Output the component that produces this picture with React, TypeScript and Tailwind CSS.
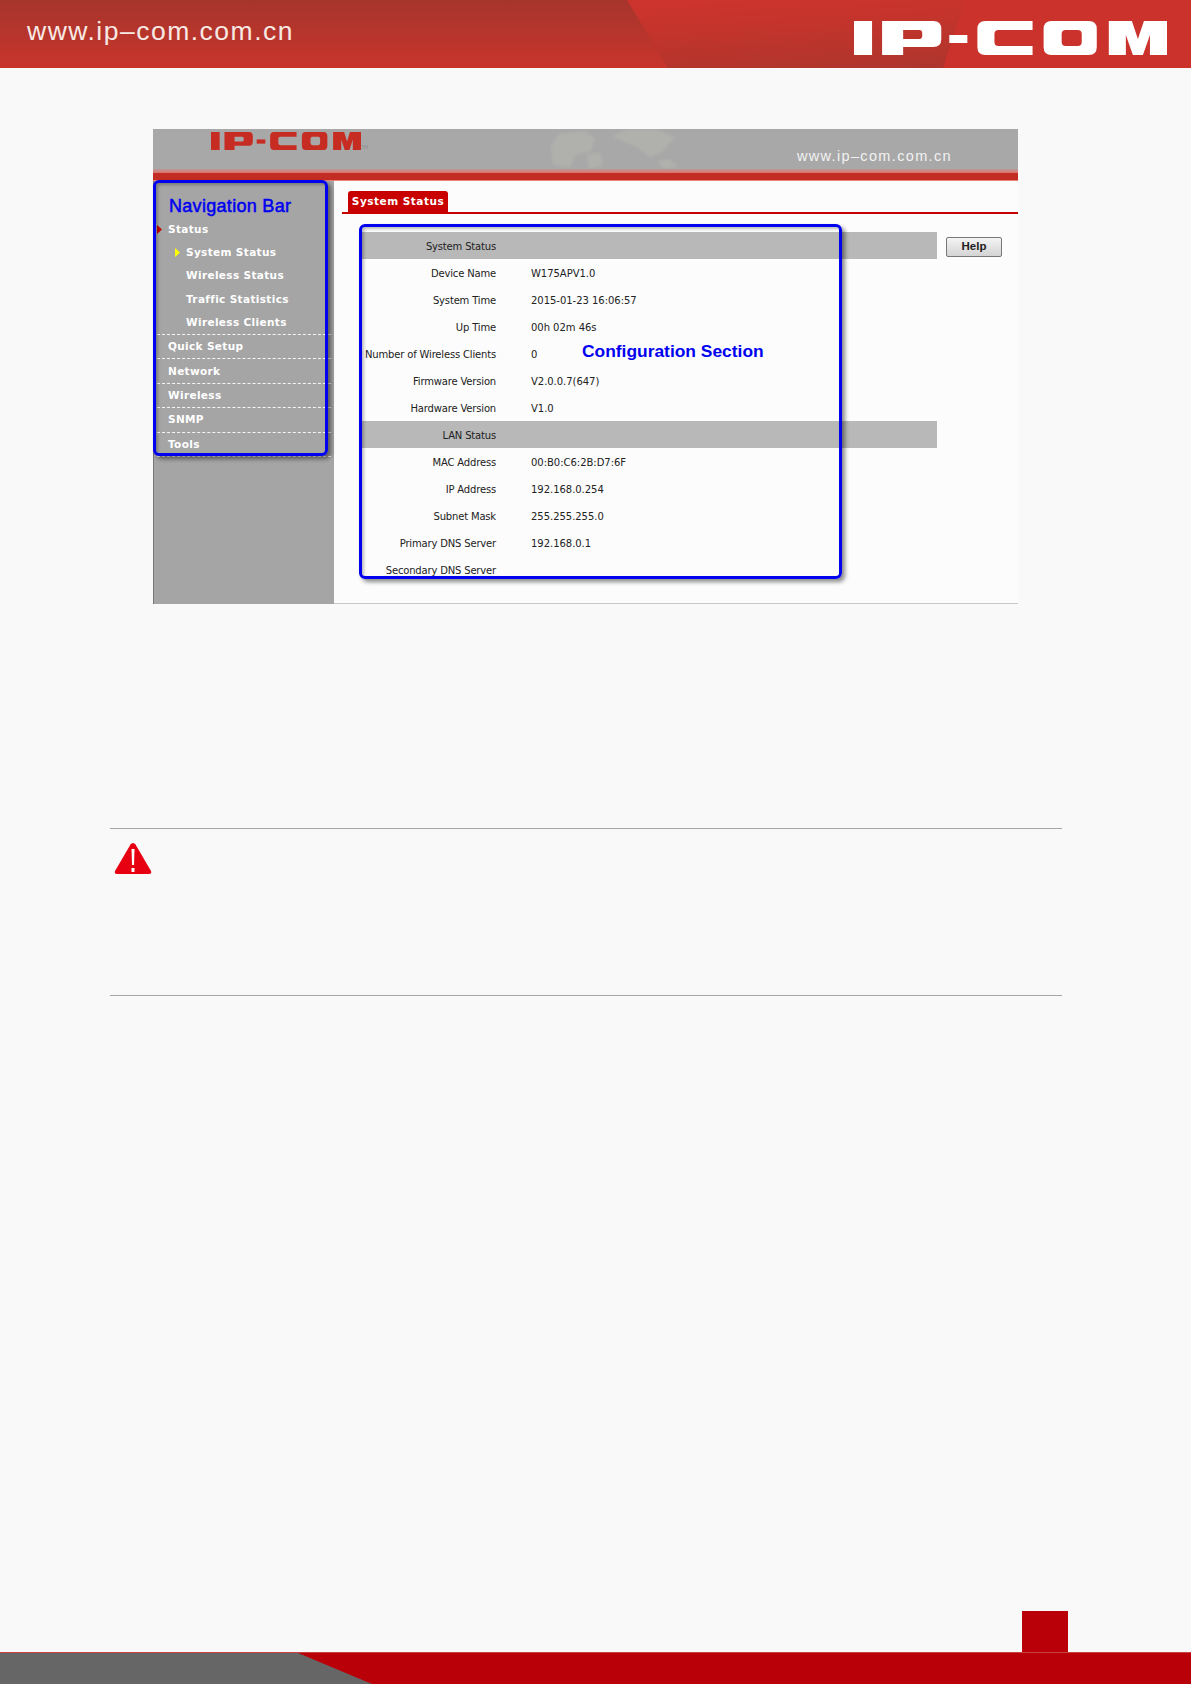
import React from "react";

function Logo({ className, fill }: { className: string; fill: string }) {
  return (
    <svg className={className} viewBox="0 0 312 34" preserveAspectRatio="none" fill={fill}>
      <rect x="0" y="0" width="18" height="34" />
      <path fillRule="evenodd" d="M28 0H79Q87 0 87 8V18Q87 26 79 26H49V34H28ZM49 9V18H65Q68 18 68 15V12Q68 9 65 9Z" />
      <rect x="95" y="14" width="18" height="8" />
      <path d="M131 0H178V9H144Q140 9 140 13V21Q140 25 144 25H178V34H131Q123 34 123 26V8Q123 0 131 0Z" />
      <path fillRule="evenodd" d="M197 0H234Q242 0 242 8V26Q242 34 234 34H197Q189 34 189 26V8Q189 0 197 0ZM211 9Q207 9 207 13V21Q207 25 211 25H223Q227 25 227 21V13Q227 9 223 9Z" />
      <path d="M254 34V0H277L283 18L289 0H312V34H295V14L288 34H278L271 14V34Z" />
    </svg>
  );
}

const SideRow = ({ label, arrow, sub }: { label: string; arrow?: string; sub?: boolean }) => (
  <div className={`flex items-center h-[23.3px] pt-[1px] ${sub ? "pl-[18px]" : ""}`}>
    <svg className="w-[5px] h-[9px] shrink-0" viewBox="0 0 5 9">
      {arrow ? <path d="M0 0L5 4.5L0 9Z" fill={arrow} /> : null}
    </svg>
    <span className="ml-[6px] text-white font-bold">{label}</span>
  </div>
);

const TopRow = ({ label }: { label: string }) => (
  <div className="flex items-center h-[24.4px] pl-[11px] pt-[1px] border-b border-dashed border-white/90 text-white font-bold">
    {label}
  </div>
);

const rows: [string, string, boolean?][] = [
  ["System Status", "", true],
  ["Device Name", "W175APV1.0"],
  ["System Time", "2015-01-23 16:06:57"],
  ["Up Time", "00h 02m 46s"],
  ["Number of Wireless Clients", "0"],
  ["Firmware Version", "V2.0.0.7(647)"],
  ["Hardware Version", "V1.0"],
  ["LAN Status", "", true],
  ["MAC Address", "00:B0:C6:2B:D7:6F"],
  ["IP Address", "192.168.0.254"],
  ["Subnet Mask", "255.255.255.0"],
  ["Primary DNS Server", "192.168.0.1"],
  ["Secondary DNS Server", ""],
];

export default function App() {
  return (
    <div className="relative w-[1191px] h-[1684px] bg-[#f9f9f9] flex flex-col overflow-hidden font-['Liberation_Sans',sans-serif]">
      {/* Top banner */}
      <header className="relative h-[68px] shrink-0 bg-gradient-to-b from-[#a6352c] to-[#c8342c] flex items-center justify-between pl-[27px] pr-[24px]">
        <div className="absolute inset-0 [clip-path:polygon(627px_0,100%_0,100%_100%,668px_100%)] bg-gradient-to-br from-[#d9322e] via-[#c4342c] to-[#a8352c]" />
        <div className="absolute inset-0 [clip-path:polygon(965px_0,100%_0,100%_100%,943px_100%)] bg-[#cb322c]" />
        <span className="relative text-[#f7e9e4] text-[26.5px] leading-none tracking-[1.5px] -mt-[6px]">
          www.ip–com.com.cn
        </span>
        <Logo className="relative w-[313px] h-[34px] mt-[7px]" fill="#ffffff" />
      </header>

      <main className="flex-1 flex flex-col">
        {/* Screenshot of the web UI */}
        <div className="relative mt-[61px] ml-[153px] w-[865px] h-[475px] bg-[#fcfcfc] flex flex-col text-[11px] font-['DejaVu_Sans',sans-serif]">
          <div className="relative h-[40px] shrink-0 bg-[#a8a8a8] flex items-center justify-between pl-[58px] pr-[66px] overflow-hidden">
            <div className="flex items-start -mt-[16px]">
              <Logo className="w-[150px] h-[18px]" fill="#c62c22" />
              <span className="text-[5px] leading-none mt-[13px] text-[#8f8f8f] font-['Liberation_Sans',sans-serif]">TM</span>
            </div>
            <svg className="absolute left-[392px] top-0 w-[140px] h-[40px] blur-[1.5px]" viewBox="0 0 140 40" fill="#b0b0ad">
              <path d="M8 36L6 16L14 5L40 2L50 10L46 22L30 26L26 38Z" />
              <path d="M42 26L56 24L58 36L44 40Z" />
              <path d="M66 8L82 0H112L130 8L116 24L104 28L92 18L82 14Z" />
              <path d="M112 32L124 30L134 38L118 40Z" />
            </svg>
            <span className="relative text-[#f2f2f2] text-[14.5px] tracking-[1.35px] mt-[15px] font-['Liberation_Sans',sans-serif]">www.ip–com.com.cn</span>
          </div>
          <div className="h-[12px] shrink-0 flex flex-col">
            <div className="h-[4px] bg-gradient-to-b from-[#b49a98] to-[#e0706a]" />
            <div className="h-[7px] bg-[#c22c22]" />
            <div className="h-[1px] bg-[#ec8078]" />
          </div>

          <div className="flex-1 flex min-h-0">
            {/* Sidebar */}
            <aside className="w-[181px] shrink-0 bg-[#a5a5a5] border-l border-[#777777] pt-[36.5px] px-[3px] text-[10.5px] tracking-[0.35px] font-['DejaVu_Sans',sans-serif]">
              <SideRow label="Status" arrow="#c80000" />
              <SideRow label="System Status" arrow="#ffff00" sub />
              <SideRow label="Wireless Status" sub />
              <SideRow label="Traffic Statistics" sub />
              <div className="border-b border-dashed border-white/90">
                <SideRow label="Wireless Clients" sub />
              </div>
              <TopRow label="Quick Setup" />
              <TopRow label="Network" />
              <TopRow label="Wireless" />
              <TopRow label="SNMP" />
              <TopRow label="Tools" />
            </aside>

            {/* Content */}
            <section className="flex-1 flex flex-col border-b border-[#c8c8c8]">
              <div className="mt-[10px] ml-[8px] h-[23px] shrink-0 border-b-2 border-[#c80000] pl-[6px]">
                <div className="w-[100px] h-[21px] bg-[#c80000] rounded-t-[3px] flex items-center justify-center text-white font-bold text-[10.5px] tracking-[0.5px]">
                  System Status
                </div>
              </div>
              <div className="flex mt-[18px] ml-[27px]">
                <div className="w-[576px] flex flex-col text-[10px] text-[#222222]">
                  {rows.map(([k, v, head]) => (
                    <div key={k} className={`flex items-center h-[27px] pt-[2px] ${head ? "bg-[#b8b8b8]" : ""}`}>
                      <span className="w-[135px] text-right tracking-[-0.17px]">{k}</span>
                      <span className="ml-[35px] tracking-[-0.03px]">{v}</span>
                    </div>
                  ))}
                </div>
                <button className="ml-[9px] mt-[5px] w-[56px] h-[20px] rounded-[2px] border border-[#777777] bg-gradient-to-b from-[#f4f4f4] to-[#d4d4d4] text-[11.5px] font-bold text-[#222222] font-['Liberation_Sans',sans-serif]">
                  Help
                </button>
              </div>
            </section>
          </div>

          {/* Annotations laid over the screenshot */}
          <div className="absolute left-0 top-[51px] w-[175px] h-[276px] rounded-[6px] border-[3px] border-[#0000f0] shadow-[3px_3px_4px_rgba(0,0,0,0.45),inset_2px_2px_3px_rgba(0,0,0,0.25)]" />
          <div className="absolute left-[206px] top-[95px] w-[483px] h-[355px] rounded-[6px] border-[3px] border-[#0000f0] shadow-[3px_3px_4px_rgba(0,0,0,0.45),inset_2px_2px_3px_rgba(0,0,0,0.25)]" />
          <span className="absolute left-[16px] top-[66px] text-[18px] leading-[22px] text-[#0000f0] font-['Liberation_Sans',sans-serif] [-webkit-text-stroke:0.5px_#0000f0] tracking-[0.3px]">
            Navigation Bar
          </span>
          <span className="absolute left-[429px] top-[211px] text-[17.4px] leading-[22px] font-bold text-[#0000f0] font-['Liberation_Sans',sans-serif]">
            Configuration Section
          </span>
        </div>

        {/* Note block */}
        <div className="mt-[224px] ml-[110px] w-[952px] h-[168px] border-y border-[#a6a6a6] pt-[13px] pl-[4px]">
          <svg className="w-[38px] h-[33px]" viewBox="0 0 38 33">
            <path d="M19 1Q20.5 1 21.5 2.5L37 29Q38 32 35 32H3Q0 32 1 29L16.5 2.5Q17.5 1 19 1Z" fill="#e60012" />
            <path d="M17.5 7H20.5L20 23H18Z" fill="#ffffff" />
            <rect x="17.5" y="26" width="3" height="4" fill="#ffffff" />
          </svg>
        </div>
      </main>

      {/* Footer */}
      <footer className="h-[73px] shrink-0 flex flex-col">
        <div className="self-end mr-[123px] w-[46px] h-[41px] bg-[#b90009]" />
        <div className="relative flex-1 bg-[#b90009] border-t border-[#c8423f] overflow-hidden">
          <div className="absolute inset-0 bg-[#666666] [clip-path:polygon(0_0,298px_0,372px_100%,0_100%)]" />
        </div>
      </footer>
    </div>
  );
}
